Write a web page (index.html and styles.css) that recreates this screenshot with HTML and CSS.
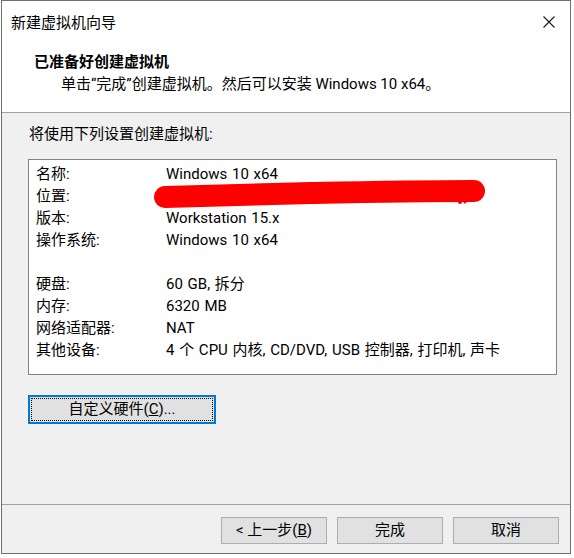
FILE: index.html
```html
<!DOCTYPE html>
<html lang="zh-CN">
<head>
    <meta charset="UTF-8">
    <title>新建虚拟机向导</title>
    <link rel="stylesheet" href="styles.css">
</head>
<body>
    <div class="window">
        <div class="titlebar">
            <span class="title">新建虚拟机向导</span>
            <svg class="close" width="12" height="12" viewBox="0 0 12 12">
                <path d="M0.5 0.5 L11.5 11.5 M11.5 0.5 L0.5 11.5" stroke="#1a1a1a" stroke-width="1.1" fill="none"/>
            </svg>
        </div>

        <div class="header">
            <h1>已准备好创建虚拟机</h1>
            <p>单击“完成”创建虚拟机。然后可以安装 Windows 10 x64。</p>
        </div>

        <div class="content">
            <p class="intro">将使用下列设置创建虚拟机:</p>
            <div class="summary">
                <div class="row"><span class="label">名称:</span><span class="value">Windows 10 x64</span></div>
                <div class="row"><span class="label">位置:</span><span class="value">&nbsp;</span></div>
                <div class="row"><span class="label">版本:</span><span class="value">Workstation 15.x</span></div>
                <div class="row"><span class="label">操作系统:</span><span class="value">Windows 10 x64</span></div>
                <div class="row"><span class="label">&nbsp;</span><span class="value"></span></div>
                <div class="row"><span class="label">硬盘:</span><span class="value">60 GB, 拆分</span></div>
                <div class="row"><span class="label">内存:</span><span class="value">6320 MB</span></div>
                <div class="row"><span class="label">网络适配器:</span><span class="value">NAT</span></div>
                <div class="row"><span class="label">其他设备:</span><span class="value">4 个 CPU 内核, CD/DVD, USB 控制器, 打印机, 声卡</span></div>

                <!-- redacted path -->
                <svg class="scribble" width="340" height="30" viewBox="0 0 340 30">
                    <path d="M11 17 C60 16 110 14 160 13 S260 11 320 11" stroke="#ff0000" stroke-width="22" stroke-linecap="round" fill="none"/>
                    <circle cx="306" cy="22" r="2" fill="#ff0000"/>
                    <circle cx="311" cy="22" r="1.5" fill="#ff0000"/>
                </svg>
            </div>
            <button class="btn custom"><span class="focus">自定义硬件(<u>C</u>)...</span></button>
        </div>

        <div class="footer">
            <button class="btn">&lt; 上一步(<u>B</u>)</button>
            <button class="btn">完成</button>
            <button class="btn">取消</button>
        </div>
    </div>
</body>
</html>
```

FILE: styles.css
```css
/* Base */
* {
    margin: 0;
    padding: 0;
    box-sizing: border-box;
}

body {
    background: #ffffff;
    font-family: Roboto, "Noto Sans CJK SC", sans-serif;
    font-size: 15px;
    color: #000000;
}

/* Window frame */
.window {
    width: 570px;
    height: 554px;
    margin-left: 1px;
    border: 1px solid #707070;
    background: #f0f0f0;
    display: flex;
    flex-direction: column;
}

.titlebar {
    height: 43px;
    background: #ffffff;
    display: flex;
    align-items: center;
    justify-content: space-between;
    padding: 0 15px 0 9px;
}

.title {
    line-height: 20px;
}

.close {
    display: block;
    margin-top: -1px;
}

/* Header */
.header {
    height: 69px;
    background: #ffffff;
    border-bottom: 1px solid #a0a0a0;
    padding: 7px 0 0 32px;
}

.header h1 {
    font-size: 15px;
    font-weight: bold;
    line-height: 22px;
}

.header p {
    line-height: 22px;
    padding-left: 27px;
}

/* Content */
.content {
    flex: 1;
    padding: 10px 0 0 26px;
    border-bottom: 1px solid #a0a0a0;
}

.intro {
    line-height: 22px;
    padding-left: 1px;
}

.summary {
    position: relative;
    width: 529px;
    height: 216px;
    margin-top: 14px;
    background: #ffffff;
    border: 1px solid #828282;
    padding: 3px 0 0 7px;
}

.row {
    display: flex;
    height: 22px;
    line-height: 22px;
}

.label {
    width: 130px;
}

.value {
    word-spacing: 1px;
}

.scribble {
    position: absolute;
    left: 125px;
    top: 20px;
}

/* Buttons */
.btn {
    font-family: inherit;
    font-size: 15px;
    color: #000000;
    background: #e1e1e1;
    border: 1px solid #adadad;
    width: 106px;
    height: 27px;
    line-height: 23px;
}

.btn u {
    text-decoration: underline;
}

.custom {
    width: 188px;
    height: 29px;
    margin-top: 20px;
    border: 2px solid #0078d7;
    padding: 1px;
    display: block;
}

.custom .focus {
    display: block;
    height: 100%;
    border: 1px dotted #000000;
    line-height: 21px;
}

/* Footer */
.footer {
    height: 48px;
    display: flex;
    justify-content: flex-end;
    gap: 10px;
    padding: 12px 11px 0 0;
}
```
